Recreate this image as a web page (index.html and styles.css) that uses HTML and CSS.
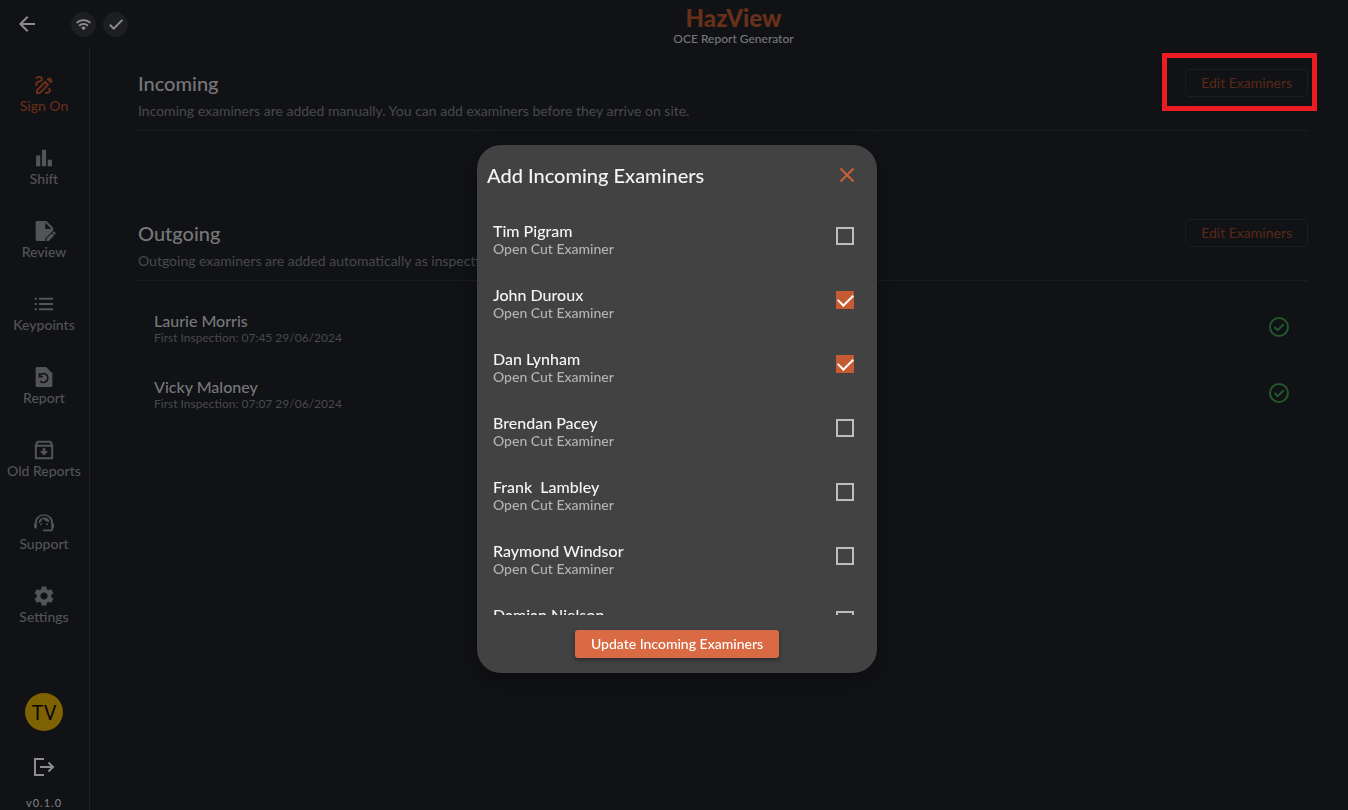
FILE: index.html
```html
<!DOCTYPE html>
<html lang="en">
<head>
<meta charset="utf-8">
<title>HazView</title>
<link rel="stylesheet" href="styles.css">
</head>
<body>
<div class="app">
  <header class="topbar">
    <div class="topbar-left">
      <button class="icon-button" aria-label="Back"><svg class="icon-lg" viewBox="0 0 24 24"><path d="M20 11H7.8l5.6-5.6L12 4l-8 8 8 8 1.4-1.4L7.8 13H20z"/></svg></button>
      <span class="status"><svg class="icon-sm" viewBox="0 0 24 24"><g fill="none" stroke="currentColor" stroke-width="3"><path d="M1 9.500a15.500 15.500 0 0 1 22 0M5 14a9.800 9.800 0 0 1 14 0"/></g><path d="M8.300 17a5.200 5.200 0 0 1 7.400 0L12 21z"/></svg></span>
      <span class="status"><svg class="icon-md" viewBox="0 0 24 24"><path d="M9 16.200L4.800 12l-1.900 1.900L9 20 21.500 7.400 19.600 5.500z"/></svg></span>
    </div>
    <div class="brand">
      <h1 class="brand-name">HazView</h1>
      <p class="brand-sub">OCE Report Generator</p>
    </div>
    <div class="topbar-right"></div>
  </header>
  <div class="body">
    <aside class="sidebar">
      <nav class="nav">
        <a href="#" class="nav-item active"><svg class="icon" viewBox="2 2 20 20"><path fill-rule="evenodd" d="M18.850 10.390l1.060-1.060c.78-.78.78-2.050 0-2.830L18.500 5.090c-.78-.78-2.050-.78-2.830 0l-1.060 1.060zM13.190 7.560L4 16.760V21h4.240l9.190-9.190zM7.410 19H6v-1.410l7.190-7.190 1.410 1.410z"/><path d="M19 17.500c0 2.190-2.540 3.500-5 3.500-.55 0-1-.45-1-1s.45-1 1-1c1.540 0 3-.73 3-1.500 0-.47-.48-.87-1.230-1.200l1.480-1.480c1.070.63 1.750 1.470 1.750 2.680zM4.580 13.350C3.610 12.790 3 12.060 3 11c0-1.800 1.890-2.630 3.560-3.360C7.590 7.180 9 6.560 9 6c0-.41-.78-1-2-1-1.260 0-1.800.61-1.830.64-.35.41-.98.46-1.400.12-.41-.34-.49-.95-.15-1.380C3.730 4.240 4.760 3 7 3s4 1.320 4 3c0 1.870-1.930 2.720-3.640 3.470C6.420 9.880 5 10.500 5 11c0 .31.43.6 1.070.86z"/></svg><span>Sign On</span></a>
        <a href="#" class="nav-item"><svg class="icon" viewBox="0 0 24 24"><path d="M2.500 9h5v13h-5zM9.500 2h5v20h-5zM16.500 14h5v8h-5z"/></svg><span>Shift</span></a>
        <a href="#" class="nav-item"><svg class="icon" viewBox="0 0 24 24"><path d="M4 0h11l8 8v3.500L13.500 21v3H4c-1.400 0-2-.8-2-2V2c0-1.200.8-2 2-2zm9.500 2v7.500H21zM15 24v-3l6.300-6.300 2.800 2.800L17.800 24zM22 14l1-1c.5-.5 1-.5 1.500 0l1.200 1.200c.5.5.5 1 0 1.500l-1 1z"/></svg><span>Review</span></a>
        <a href="#" class="nav-item"><svg class="icon" viewBox="0 0 24 24"><path d="M1 4.500h2.500V7H1zM1 10.700h2.500v2.500H1zM1 17h2.500v2.500H1zM6 4.500h17V7H6zM6 10.700h17v2.500H6zM6 17h17v2.500H6z"/></svg><span>Keypoints</span></a>
        <a href="#" class="nav-item"><svg class="icon" viewBox="0 0 24 24"><path d="M14.500 0H4C2.800 0 2 .9 2 2.200v19.600C2 23.100 2.800 24 4 24h16c1.200 0 2-.9 2-2.200V7.500z"/><path class="icon-cutout" d="M7.500 9.500a5.300 5.300 0 1 1 0 7.500M6.500 7.500v4h4"/></svg><span>Report</span></a>
        <a href="#" class="nav-item"><svg class="icon" viewBox="0 0 24 24"><path fill="none" stroke="currentColor" stroke-width="2.400" stroke-linejoin="round" d="M2.200 6.200L4.300 2.200h15.400l2.100 4v15.600H2.200zM2.200 7h19.600"/><path d="M10.300 10h3.400v3.500H17l-5 5-5-5h3.300z"/></svg><span>Old Reports</span></a>
        <a href="#" class="nav-item"><svg class="icon" viewBox="0 0 24 24"><path d="M23 12.200C23 5.700 18 1.500 12 1.500S1 5.800 1 12.300c-.6.300-1 1-1 1.700v2.300c0 1.200.9 2.200 2.200 2.200h1.100v-6.700a8.700 8.700 0 0 1 17.400 0v7.900H11V22h9.700c1.200 0 2.200-1 2.200-2.200v-1.300c.7-.4 1.100-.9 1.100-1.600v-3c0-.7-.4-1.300-1-1.700z"/><circle cx="8.500" cy="13.500" r="1.200"/><circle cx="15.500" cy="13.500" r="1.200"/><path d="M18.700 11A6.800 6.800 0 0 0 12.100 5.300c-3.400 0-7 2.800-6.700 7.200a9 9 0 0 0 5-6.500c1.600 3 4.700 5 8.300 5z"/></svg><span>Support</span></a>
        <a href="#" class="nav-item"><svg class="icon" viewBox="2 2 20 20"><path d="M19.140 12.940c.04-.3.060-.61.060-.94 0-.32-.02-.64-.07-.94l2.030-1.580a.49.49 0 0 0 .12-.61l-1.920-3.320a.488.488 0 0 0-.59-.22l-2.390.96c-.5-.38-1.030-.7-1.620-.94l-.36-2.540a.484.484 0 0 0-.48-.41h-3.840c-.24 0-.43.17-.47.41l-.36 2.540c-.59.24-1.130.57-1.620.94l-2.390-.96c-.22-.08-.47 0-.59.22L2.740 8.870c-.12.21-.08.47.12.61l2.030 1.580c-.05.3-.09.63-.09.94s.02.64.07.94l-2.030 1.580a.49.49 0 0 0-.12.61l1.920 3.320c.12.22.37.29.59.22l2.390-.96c.5.38 1.030.7 1.620.94l.36 2.540c.05.24.24.41.48.41h3.840c.24 0 .44-.17.47-.41l.36-2.540c.59-.24 1.130-.56 1.620-.94l2.390.96c.22.08.47 0 .59-.22l1.920-3.320c.12-.22.07-.47-.12-.61l-2.010-1.580zM12 15.600c-1.980 0-3.600-1.620-3.600-3.600s1.620-3.600 3.600-3.600 3.600 1.620 3.600 3.600-1.620 3.600-3.600 3.600z"/></svg><span>Settings</span></a>
      </nav>
      <div class="account">
        <span class="avatar">TV</span>
        <button class="icon-button" aria-label="Log out"><svg class="icon-lg" viewBox="0 0 24 24"><g fill="none" stroke="currentColor" stroke-width="2"><path d="M12 4H3v16h9M8 12h13M16.500 7.500L21 12l-4.500 4.500"/></g></svg></button>
        <span class="version">v0.1.0</span>
      </div>
    </aside>
    <main class="content">
      <section class="section">
        <div class="section-head">
          <div>
            <h2 class="section-title">Incoming</h2>
            <p class="section-text">Incoming examiners are added manually. You can add examiners before they arrive on site.</p>
          </div>
          <div class="callout"><button class="edit-button">Edit Examiners</button></div>
        </div>
      </section>
      <section class="section">
        <div class="section-head">
          <div>
            <h2 class="section-title">Outgoing</h2>
            <p class="section-text">Outgoing examiners are added automatically as inspections are completed.</p>
          </div>
          <button class="edit-button">Edit Examiners</button>
        </div>
        <ul class="people">
          <li class="person">
            <div class="person-text"><p class="person-name">Laurie Morris</p><p class="person-sub">First Inspection: 07:45 29/06/2024</p></div>
            <svg class="ok" viewBox="0 0 22 22"><circle cx="11" cy="11" r="9"/><path d="M6.500 11l3.200 3.200 6-6"/></svg>
          </li>
          <li class="person">
            <div class="person-text"><p class="person-name">Vicky Maloney</p><p class="person-sub">First Inspection: 07:07 29/06/2024</p></div>
            <svg class="ok" viewBox="0 0 22 22"><circle cx="11" cy="11" r="9"/><path d="M6.500 11l3.200 3.200 6-6"/></svg>
          </li>
        </ul>
      </section>
    </main>
  </div>
</div>
<div class="overlay">
  <div class="dialog" role="dialog" aria-labelledby="dialog-title">
    <div class="dialog-head">
      <h2 class="dialog-title" id="dialog-title">Add Incoming Examiners</h2>
      <button class="close" aria-label="Close"><svg class="icon" viewBox="0 0 20 20"><path fill="none" stroke="currentColor" stroke-width="2" d="M3.500 3.500l13 13M16.500 3.500l-13 13"/></svg></button>
    </div>
    <div class="options">
      <label class="option"><span class="option-text"><span class="option-name">Tim Pigram</span><span class="option-role">Open Cut Examiner</span></span><input class="check" type="checkbox"></label>
      <label class="option"><span class="option-text"><span class="option-name">John Duroux</span><span class="option-role">Open Cut Examiner</span></span><input class="check" type="checkbox" checked></label>
      <label class="option"><span class="option-text"><span class="option-name">Dan Lynham</span><span class="option-role">Open Cut Examiner</span></span><input class="check" type="checkbox" checked></label>
      <label class="option"><span class="option-text"><span class="option-name">Brendan Pacey</span><span class="option-role">Open Cut Examiner</span></span><input class="check" type="checkbox"></label>
      <label class="option"><span class="option-text"><span class="option-name">Frank  Lambley</span><span class="option-role">Open Cut Examiner</span></span><input class="check" type="checkbox"></label>
      <label class="option"><span class="option-text"><span class="option-name">Raymond Windsor</span><span class="option-role">Open Cut Examiner</span></span><input class="check" type="checkbox"></label>
      <label class="option"><span class="option-text"><span class="option-name">Damian Nielson</span><span class="option-role">Open Cut Examiner</span></span><input class="check" type="checkbox"></label>
    </div>
    <button class="update-button">Update Incoming Examiners</button>
  </div>
</div>
</body>
</html>
```
FILE: styles.css
```css
* { box-sizing: border-box; }
body {
  margin: 0;
  background: #111216;
  color: #7c7c7e;
  font-family: Lato, sans-serif;
  font-size: 14px;
  line-height: 20px;
}
h1, h2, p, ul { margin: 0; padding: 0; }
ul { list-style: none; }
button { font: inherit; cursor: pointer; }
svg { display: block; fill: currentColor; }

.app { min-height: 100vh; display: flex; flex-direction: column; }
.topbar { display: flex; height: 48px; }
.topbar-left, .topbar-right { flex: 1 1 0; display: flex; align-items: center; }
.topbar-left { gap: 7px; color: #8d8d8f; }
.icon-button { padding: 0; border: 0; background: none; color: #8d8d8f; }
.topbar-left .icon-button { margin: 0 25px 0 15px; }
.icon { width: 20px; height: 20px; }
.icon-lg { width: 24px; height: 24px; }
.icon-md { width: 18px; height: 18px; }
.icon-sm { width: 15px; height: 15px; }
.status {
  width: 25px;
  height: 25px;
  border-radius: 50%;
  background: #1d1e22;
  display: flex;
  align-items: center;
  justify-content: center;
}
.brand { margin-left: 119px; padding-top: 4px; text-align: center; }
.brand-name { font-size: 24px; line-height: 28px; font-weight: 900; color: #693019; }
.brand-sub { font-size: 12px; line-height: 14px; font-weight: 500; color: #77777a; }

.body { flex: 1; display: flex; }
.sidebar {
  width: 90px;
  flex: none;
  border-right: 1px solid #202125;
  padding: 27px 1px 0 0;
  display: flex;
  flex-direction: column;
  justify-content: space-between;
}
.nav { display: flex; flex-direction: column; gap: 32px; }
.nav-item {
  display: flex;
  flex-direction: column;
  align-items: center;
  gap: 1px;
  color: #535457;
  font-weight: 500;
  text-decoration: none;
}
.nav-item.active { color: #6b2f19; font-weight: 400; }
.nav-item .icon { overflow: visible; }
.icon-cutout { fill: none; stroke: #111216; stroke-width: 2; }
.account { display: flex; flex-direction: column; align-items: center; }
.avatar {
  width: 38px;
  height: 38px;
  margin-bottom: 24px;
  border-radius: 50%;
  background: #7e6100;
  color: #08080a;
  font-family: Roboto, sans-serif;
  font-size: 20px;
  line-height: 40px;
  text-align: center;
}
.version { margin-top: 17px; font-size: 11px; line-height: 14px; font-weight: 500; letter-spacing: 1px; }

.content { flex: 1; min-width: 0; padding: 21px 40px 0 48px; }
.section + .section { margin-top: 88px; }
.section-head {
  display: flex;
  justify-content: space-between;
  align-items: flex-start;
  padding-bottom: 9px;
  border-bottom: 1px solid #1b1c20;
}
.section-title { font-size: 20px; line-height: 28px; font-weight: 500; color: #77777a; }
.section-text { margin-top: 4px; color: #48494c; }
.edit-button {
  height: 28px;
  padding: 0 15px;
  border: 1px solid #1c1d21;
  border-radius: 4px;
  background: none;
  color: #592917;
  display: block;
}
.callout { position: relative; }
.callout::after {
  content: "";
  position: absolute;
  inset: -16px -9px -14px -23px;
  border: 5px solid #ec1c24;
  pointer-events: none;
}
.people { padding: 13px 16px 0; }
.person { height: 66px; display: flex; align-items: center; justify-content: space-between; }
.person-text { padding-top: 4px; }
.person-name { font-size: 16px; line-height: 18px; font-weight: 500; color: #77777a; }
.person-sub { font-size: 12px; line-height: 16px; color: #48494c; }
.ok { width: 22px; height: 22px; fill: none; stroke: #215a2a; stroke-width: 2; margin-right: 2px; }

.overlay {
  position: fixed;
  inset: 0;
  padding: 8px 0 0 6px;
  display: flex;
  align-items: center;
  justify-content: center;
}
.dialog {
  width: 400px;
  max-width: 90%;
  padding: 14px 10px 15px;
  border-radius: 24px;
  background: #424242;
  box-shadow: 0 8px 24px rgba(0, 0, 0, 0.3);
  display: flex;
  flex-direction: column;
}
.dialog-head { display: flex; justify-content: space-between; align-items: center; height: 32px; padding-right: 10px; }
.dialog-title { font-size: 20px; line-height: 28px; font-weight: 500; color: #f5f5f5; }
.close { padding: 0; border: 0; background: none; color: #cb5f38; }
.options { margin-top: 13px; height: 411px; overflow: hidden; }
.option { height: 64px; padding: 0 13px 0 6px; display: flex; align-items: center; justify-content: space-between; }
.option-text { padding-top: 8px; }
.option-name, .option-role { display: block; line-height: 18px; font-weight: 500; }
.option-name { font-size: 16px; color: #f5f5f5; white-space: pre; }
.option-role { font-size: 14px; color: #b3b3b3; }
.check {
  appearance: none;
  width: 18px;
  height: 18px;
  margin: 0;
  border: 2px solid #bdbdbd;
  display: grid;
  place-items: center;
}
.check:checked { border-color: #c65a33; background: #c65a33; }
.check:checked::before {
  content: "";
  width: 13px;
  height: 7px;
  border: solid #fff;
  border-width: 0 0 2px 2px;
  transform: translateY(-2px) rotate(-45deg);
}
.update-button {
  align-self: center;
  margin-top: 15px;
  height: 28px;
  padding: 0 16px;
  border: 0;
  border-radius: 3px;
  background: #d96a43;
  color: #fff;
  font-weight: 500;
  box-shadow: 0 2px 4px rgba(0, 0, 0, 0.4);
}
```
